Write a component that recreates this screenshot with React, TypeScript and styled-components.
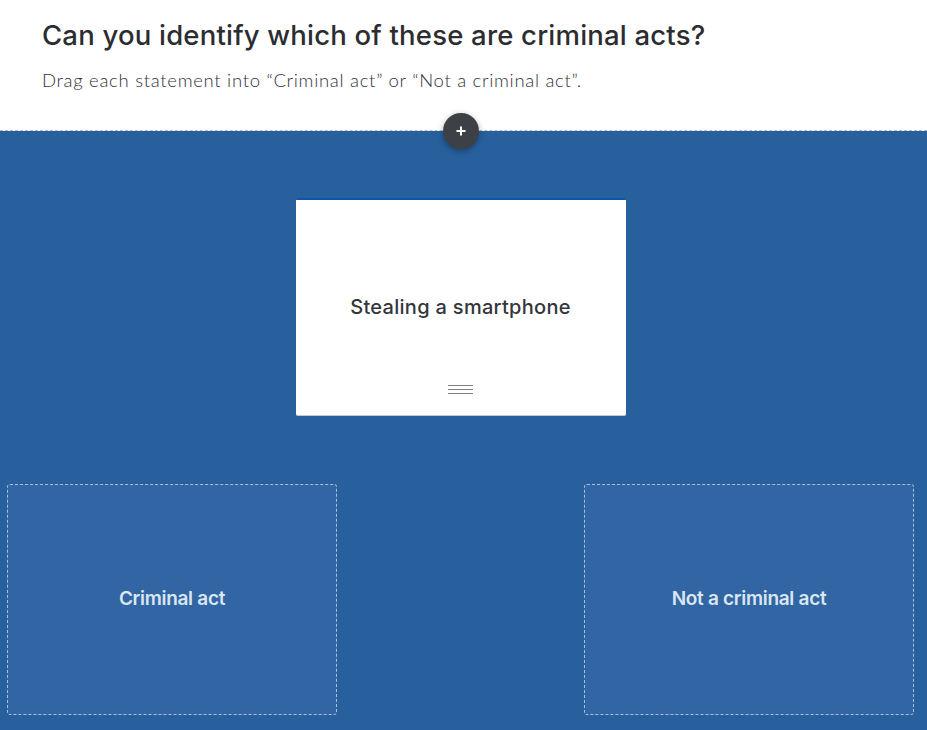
import styled, { createGlobalStyle } from "styled-components";

const GlobalStyle = createGlobalStyle`
  body {
    margin: 0;
    background: #28609e;
    font-family: "Open Sans", "Liberation Sans", sans-serif;
  }
`;

const Page = styled.div`
  width: 927px;
  min-height: 730px;
  display: flex;
  flex-direction: column;
`;

const Header = styled.header`
  background: #ffffff;
  height: 131px;
  box-sizing: border-box;
  padding: 19px 42px 0;
  border-bottom: 1px dashed #b9bcc0;
  position: relative;
`;

const Title = styled.h1`
  margin: 0;
  font-family: Inter, "Noto Sans", sans-serif;
  font-size: 27.5px;
  font-weight: 500;
  letter-spacing: 0.2px;
  color: #2b2d31;
  line-height: 32px;
`;

const Subtitle = styled.p`
  margin: 18px 0 0;
  font-family: Lato, "Noto Sans", sans-serif;
  font-size: 18.5px;
  font-weight: 300;
  letter-spacing: 0.7px;
  color: #2f3237;
  line-height: 22px;
`;

const AddButton = styled.button`
  position: absolute;
  left: 443px;
  bottom: -19px;
  width: 36px;
  height: 36px;
  border-radius: 50%;
  border: none;
  padding: 0;
  background: #3d4146;
  box-shadow: 0 2px 6px rgba(0, 0, 0, 0.35);
  display: flex;
  align-items: center;
  justify-content: center;
  z-index: 2;
`;

const Board = styled.main`
  flex: 1;
  background: #28609e;
  padding: 67px 13px 16px 7px;
  display: flex;
  flex-direction: column;
  align-items: center;
  gap: 68px;
`;

const Card = styled.div`
  width: 330px;
  height: 218px;
  box-sizing: border-box;
  background: #ffffff;
  border-top: 2px solid #0e55ad;
  border-bottom: 1px solid #c4c6c9;
  border-radius: 2px;
  display: flex;
  flex-direction: column;
  align-items: center;
`;

const CardText = styled.div`
  flex: 1;
  display: flex;
  align-items: center;
  justify-content: center;
  padding-top: 28px;
  font-family: Inter, "Noto Sans", sans-serif;
  font-size: 20px;
  font-weight: 500;
  letter-spacing: 0.3px;
  color: #33363b;
`;

const Handle = styled.div`
  width: 25px;
  height: 7px;
  margin-bottom: 21px;
  border-top: 1px solid #7b7e82;
  border-bottom: 1px solid #7b7e82;
  position: relative;
  &::after {
    content: "";
    position: absolute;
    left: 0;
    right: 0;
    top: 3px;
    border-top: 1px solid #7b7e82;
  }
`;

const Zones = styled.div`
  width: 100%;
  display: flex;
  justify-content: space-between;
`;

const Zone = styled.div`
  width: 330px;
  height: 231px;
  box-sizing: border-box;
  background: #3165a3;
  border: 1px dashed #a9c0dc;
  border-radius: 3px;
  display: flex;
  align-items: center;
  justify-content: center;
  padding-bottom: 2px;
  font-family: Inter, "Noto Sans", sans-serif;
  font-size: 19px;
  font-weight: 600;
  letter-spacing: -0.3px;
  color: #dbe6f3;
`;

export default function App() {
  return (
    <>
      <GlobalStyle />
      <Page>
        <Header>
          <Title>Can you identify which of these are criminal acts?</Title>
          <Subtitle>Drag each statement into “Criminal act” or “Not a criminal act”.</Subtitle>
          <AddButton aria-label="Add">
            <svg width="10" height="10" viewBox="0 0 10 10">
              <path d="M5 0.5v9M0.5 5h9" stroke="#ffffff" strokeWidth="2" />
            </svg>
          </AddButton>
        </Header>
        <Board>
          <Card>
            <CardText>Stealing a smartphone</CardText>
            <Handle />
          </Card>
          <Zones>
            <Zone>Criminal act</Zone>
            <Zone>Not a criminal act</Zone>
          </Zones>
        </Board>
      </Page>
    </>
  );
}
